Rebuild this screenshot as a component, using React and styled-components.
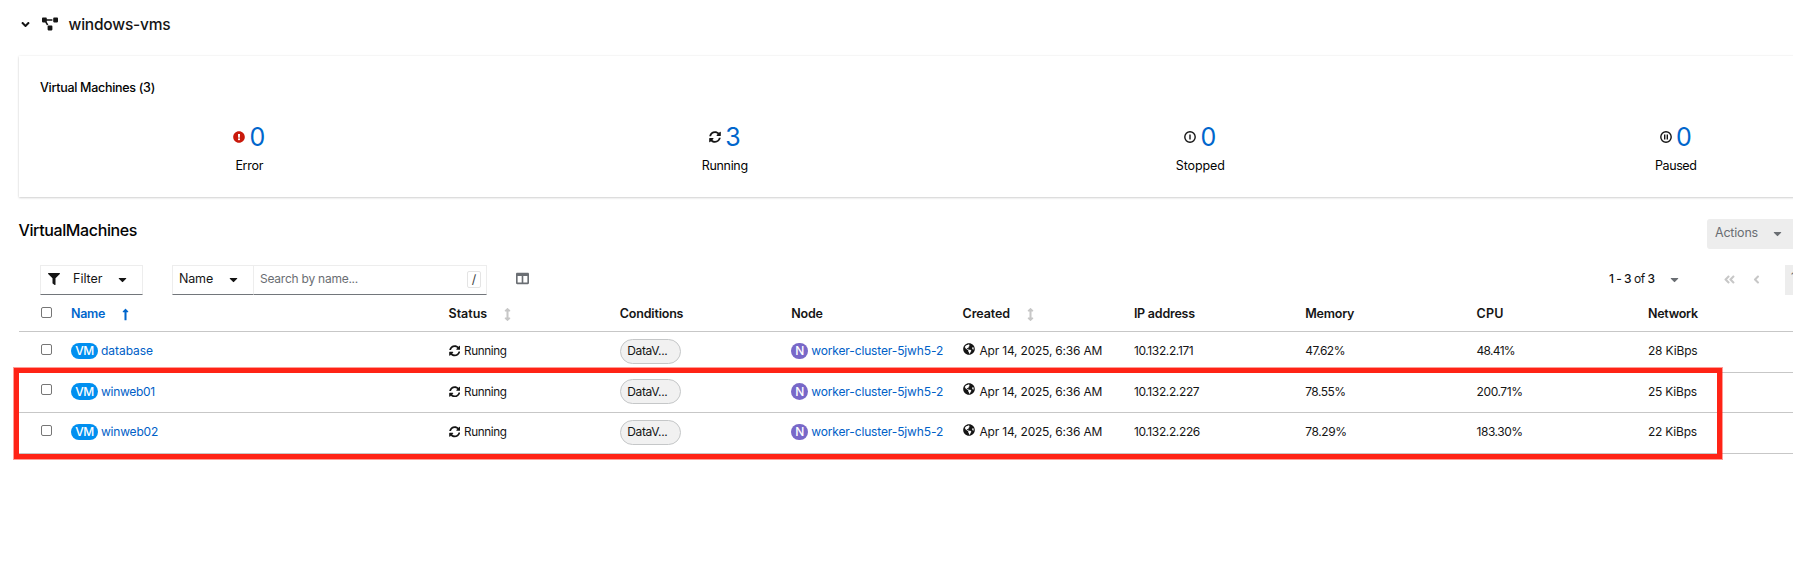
import React from "react";
import styled, { createGlobalStyle } from "styled-components";
import { FaSyncAlt, FaGlobeAmericas, FaFilter, FaCaretDown, FaAngleDown, FaAngleLeft, FaAngleDoubleLeft, FaExclamationCircle, FaProjectDiagram, FaColumns, FaArrowsAltV, FaLongArrowAltUp } from "react-icons/fa";

const Global = createGlobalStyle`
  * { box-sizing: border-box; }
  html, body { margin: 0; overflow: hidden; background: #fff; }
  body { font-family: Inter, "Liberation Sans", sans-serif; font-size: 12.5px; line-height: 18px; color: #151515; }
  svg { flex: none; }
`;
const Page = styled.main`
  position: relative; width: 1793px; height: 582px; overflow: hidden; padding-left: 19px;
`;
const T = styled.span`
  flex: none; white-space: nowrap; letter-spacing: ${(p) => p.$ls || 0}px;
`;

const ProjectHeader = styled.header`
  display: flex; align-items: center; height: 56px; padding: 0 0 7px 0;
  svg { margin-bottom: 1px; }
  svg:nth-of-type(2) { margin-left: 9.5px; }
`;
const ProjectName = styled.h1`
  margin: 0 0 0 11px; font-size: 15.5px; font-weight: 450; line-height: 24px;
`;
const Card = styled.section`
  width: 1886px; height: 141px; padding-top: 22px;
  box-shadow: 0 1px 2px rgba(3,3,3,.16), 0 0 2px rgba(3,3,3,.08);
`;
const CardTitle = styled.h2`
  margin: 0 0 0 21px; font-size: 12.5px; font-weight: 500; line-height: 20px; color: #030303;
`;
const Stats = styled.div`
  display: grid; grid-template-columns: repeat(4, 475.5px); margin: 24px 0 0 -7.5px;
`;
const Stat = styled.div`
  display: flex; flex-direction: column; align-items: center; color: #030303;
`;
const StatValue = styled.div`
  display: flex; align-items: center; gap: 4.5px; height: 30px;
  font-size: 25px; line-height: 30px; color: #06c;
`;
const StatName = styled.div` margin-top: 5px; line-height: 18px; `;

const Heading = styled.div`
  display: flex; justify-content: space-between; width: 1788px; height: 68px; padding-top: 22px;
`;
const ListTitle = styled.h2` margin: 0 0 0 -.5px; font-size: 16px; font-weight: 450; line-height: 22px; color: #030303; `;
const Actions = styled.button`
  display: flex; align-items: center; gap: 13.5px; width: 100px; height: 30px; padding: 0 0 2px 8px;
  border: 0; border-radius: 3px; background: #ededed; color: #6a6e73; font: inherit;
`;
const Toolbar = styled.div` display: flex; align-items: flex-start; height: 32px; padding-left: 21px; `;
const Control = styled.div`
  display: flex; flex: none; align-items: center; width: ${(p) => p.$w}px; height: 30px; padding: 0 0 2px ${(p) => p.$pl}px;
  margin-left: ${(p) => p.$ml || 0}px; border: 1px solid #ededed; border-bottom-color: #72767b;
`;
const Gap = styled.span` flex: 0 0 ${(p) => p.$w}px; `;
const SearchText = styled.span` flex: 1; font-size: 12px; color: #6a6e73; `;
const Key = styled.kbd`
  display: grid; place-items: center; width: 14px; height: 17px; margin-right: 5px;
  border: 1px solid #e4e4e4; border-radius: 2px; font: 12.5px Inter, sans-serif; color: #3c3f42;
`;
const ColumnsButton = styled.div` display: flex; flex: none; align-items: center; height: 27px; margin-left: 29px; color: #6a6e73; `;
const Pager = styled.div`
  display: flex; flex: none; align-items: center; height: 30px; margin-left: 1080px; padding-bottom: 2px;
  white-space: nowrap; color: #6a6e73;
`;
const PagerRange = styled.div` width: 46px; font-size: 12px; color: #151515; b { font-weight: 550; } `;
const PageInput = styled.div`
  flex: none; width: 50px; height: 30px; margin: 2px 0 0 22px; padding: 4px 0 0 6px; background: #ededed; color: #6a6e73;
`;

const Row = styled.div`
  display: grid; grid-template-columns: 52px 377.5px repeat(8, 171.35px); align-items: center;
  width: 1886px; height: ${(p) => p.$h}px; border-bottom: 1px solid #c7c7c7; font-size: 12px;
`;
const HeadCell = styled.div`
  display: flex; align-items: center; gap: 13.5px; font-size: 12.5px; font-weight: 600;
  color: ${(p) => (p.$active ? "#06c" : "#151515")};
  svg { color: ${(p) => (p.$active ? "#06c" : "#c7c7c7")}; }
`;
const Cell = styled.div`
  display: flex; align-items: center; gap: ${(p) => p.$gap || 3}px; padding-bottom: 2px;
`;
const Check = styled.span`
  width: 11px; height: 11px; margin: 0 0 ${(p) => p.$mb}px 21.5px; border: 1px solid #767676; border-radius: 2px;
`;
const Badge = styled.span`
  display: flex; align-items: center; justify-content: center; width: ${(p) => p.$w}px; height: 16.5px; border-radius: 9px;
  background: ${(p) => p.$bg}; color: #fff; line-height: 16px; font-weight: 500;
`;
const Link = styled.a` color: #0060c7; `;
const StatusText = styled.span` display: flex; font-size: 11.7px; `;
const Pill = styled.span`
  display: flex; align-items: center; width: 61px; height: 25px; margin-left: .5px; padding-left: 6px;
  border: 1px solid #c5c7c8; border-radius: 13px; background: #f1f1f1;
`;
const Globe = styled.span` display: flex; padding-bottom: 5px; `;
const Highlight = styled.div`
  position: absolute; left: 14px; top: 368px; width: 1708px; height: 91px;
  border: 5px solid #ff2316; box-shadow: 0 0 0 1px rgba(255,35,22,.45);
`;
const CircleIcon = ({ pause }) => (
  <svg width="12" height="12" viewBox="0 0 12 12" fill="none" stroke="#151515">
    <circle cx="6" cy="6" r="5.2" strokeWidth="1.4" />
    <path d={pause ? "M4.7 3.6v4.8M7.3 3.6v4.8" : "M6 3.4v5.2"} strokeWidth="1.4" />
  </svg>
);

const stats = [
  { name: "Error", n: 0, ls: -0.28, icon: <FaExclamationCircle size={12} color="#c9190b" /> },
  { name: "Running", n: 3, ls: -0.33, icon: <FaSyncAlt size={12} color="#151515" /> },
  { name: "Stopped", n: 0, ls: -0.1, icon: <CircleIcon /> },
  { name: "Paused", n: 0, ls: -0.4, icon: <CircleIcon pause /> },
];
const rows = [
  { h: 41, name: ["database", -0.04], ip: ["10.132.2.171", -0.37], mem: ["47.62%", -0.5], cpu: ["48.41%", -0.7], net: ["28 KiBps", -0.15] },
  { h: 40, name: ["winweb01", -0.28], ip: ["10.132.2.227", -0.37], mem: ["78.55%", -0.5], cpu: ["200.71%", -0.41], net: ["25 KiBps", -0.2] },
  { h: 41, name: ["winweb02", -0.2], ip: ["10.132.2.226", -0.37], mem: ["78.29%", -0.38], cpu: ["183.30%", -0.48], net: ["22 KiBps", -0.2] },
];

export default function App() {
  return (
    <>
      <Global />
      <Page>
        <ProjectHeader>
          <FaAngleDown size={13} /><FaProjectDiagram size={16} />
          <ProjectName><T $ls={-0.2}>windows-vms</T></ProjectName>
        </ProjectHeader>
        <Card>
          <CardTitle><T $ls={-0.29}>Virtual Machines (3)</T></CardTitle>
          <Stats>
            {stats.map((s) => (
              <Stat key={s.name}>
                <StatValue>{s.icon}<T>{s.n}</T></StatValue>
                <StatName><T $ls={s.ls}>{s.name}</T></StatName>
              </Stat>
            ))}
          </Stats>
        </Card>
        <Heading>
          <ListTitle><T $ls={-0.38}>VirtualMachines</T></ListTitle>
          <Actions><T $ls={-0.2}>Actions</T><FaCaretDown size={13} /></Actions>
        </Heading>
        <Toolbar>
          <Control $w={103} $pl={7}><FaFilter size={12} /><Gap $w={13} /><T>Filter</T><Gap $w={13} /><FaCaretDown size={13} /></Control>
          <Control $w={82} $pl={6} $ml={29}><T $ls={-0.17}>Name</T><Gap $w={13.5} /><FaCaretDown size={13} /></Control>
          <Control $w={234} $pl={6} $ml={-1}><SearchText><T $ls={-0.24}>Search by name...</T></SearchText><Key>/</Key></Control>
          <ColumnsButton><FaColumns size={13} /></ColumnsButton>
          <Pager>
            <PagerRange><T $ls={-0.48}><b>1 - 3</b> of <b>3</b></T></PagerRange><Gap $w={13} /><FaCaretDown size={13} />
            <Gap $w={42} /><FaAngleDoubleLeft size={13} color="#c7c7c7" /><Gap $w={14} /><FaAngleLeft size={13} color="#c7c7c7" />
            <PageInput>1</PageInput>
          </Pager>
        </Toolbar>
        <Row $h={35}>
          <Check $mb={4} />
          <HeadCell $active><T $ls={-0.33}>Name</T><FaLongArrowAltUp size={13} /></HeadCell>
          <HeadCell><T>Status</T><FaArrowsAltV size={13} /></HeadCell>
          <HeadCell><T $ls={-0.19}>Conditions</T></HeadCell>
          <HeadCell><T $ls={-0.2}>Node</T></HeadCell>
          <HeadCell><T $ls={-0.08}>Created</T><FaArrowsAltV size={13} /></HeadCell>
          <HeadCell><T $ls={-0.23}>IP address</T></HeadCell>
          <HeadCell><T $ls={-0.22}>Memory</T></HeadCell>
          <HeadCell><T $ls={0.17}>CPU</T></HeadCell>
          <HeadCell><T $ls={-0.25}>Network</T></HeadCell>
        </Row>
        {rows.map((r) => (
          <Row $h={r.h} key={r.name[0]}>
            <Check $mb={6} />
            <Cell><Badge $w={27} $bg="#008ff0"><T $ls={-0.4}>VM</T></Badge><Link><T $ls={r.name[1]}>{r.name[0]}</T></Link></Cell>
            <Cell $gap={4}><FaSyncAlt size={11.5} /><StatusText><T $ls={-0.38}>Running</T></StatusText></Cell>
            <Cell><Pill><T $ls={-0.38}>DataV...</T></Pill></Cell>
            <Cell><Badge $w={17} $bg="#7868c8"><T>N</T></Badge><Link><T $ls={-0.13}>worker-cluster-5jwh5-2</T></Link></Cell>
            <Cell $gap={5}><Globe><FaGlobeAmericas size={12} /></Globe><T $ls={-0.2}>Apr 14, 2025, 6:36 AM</T></Cell>
            {[r.ip, r.mem, r.cpu, r.net].map(([text, ls]) => (
              <Cell key={text}><T $ls={ls}>{text}</T></Cell>
            ))}
          </Row>
        ))}
        <Highlight />
      </Page>
    </>
  );
}
